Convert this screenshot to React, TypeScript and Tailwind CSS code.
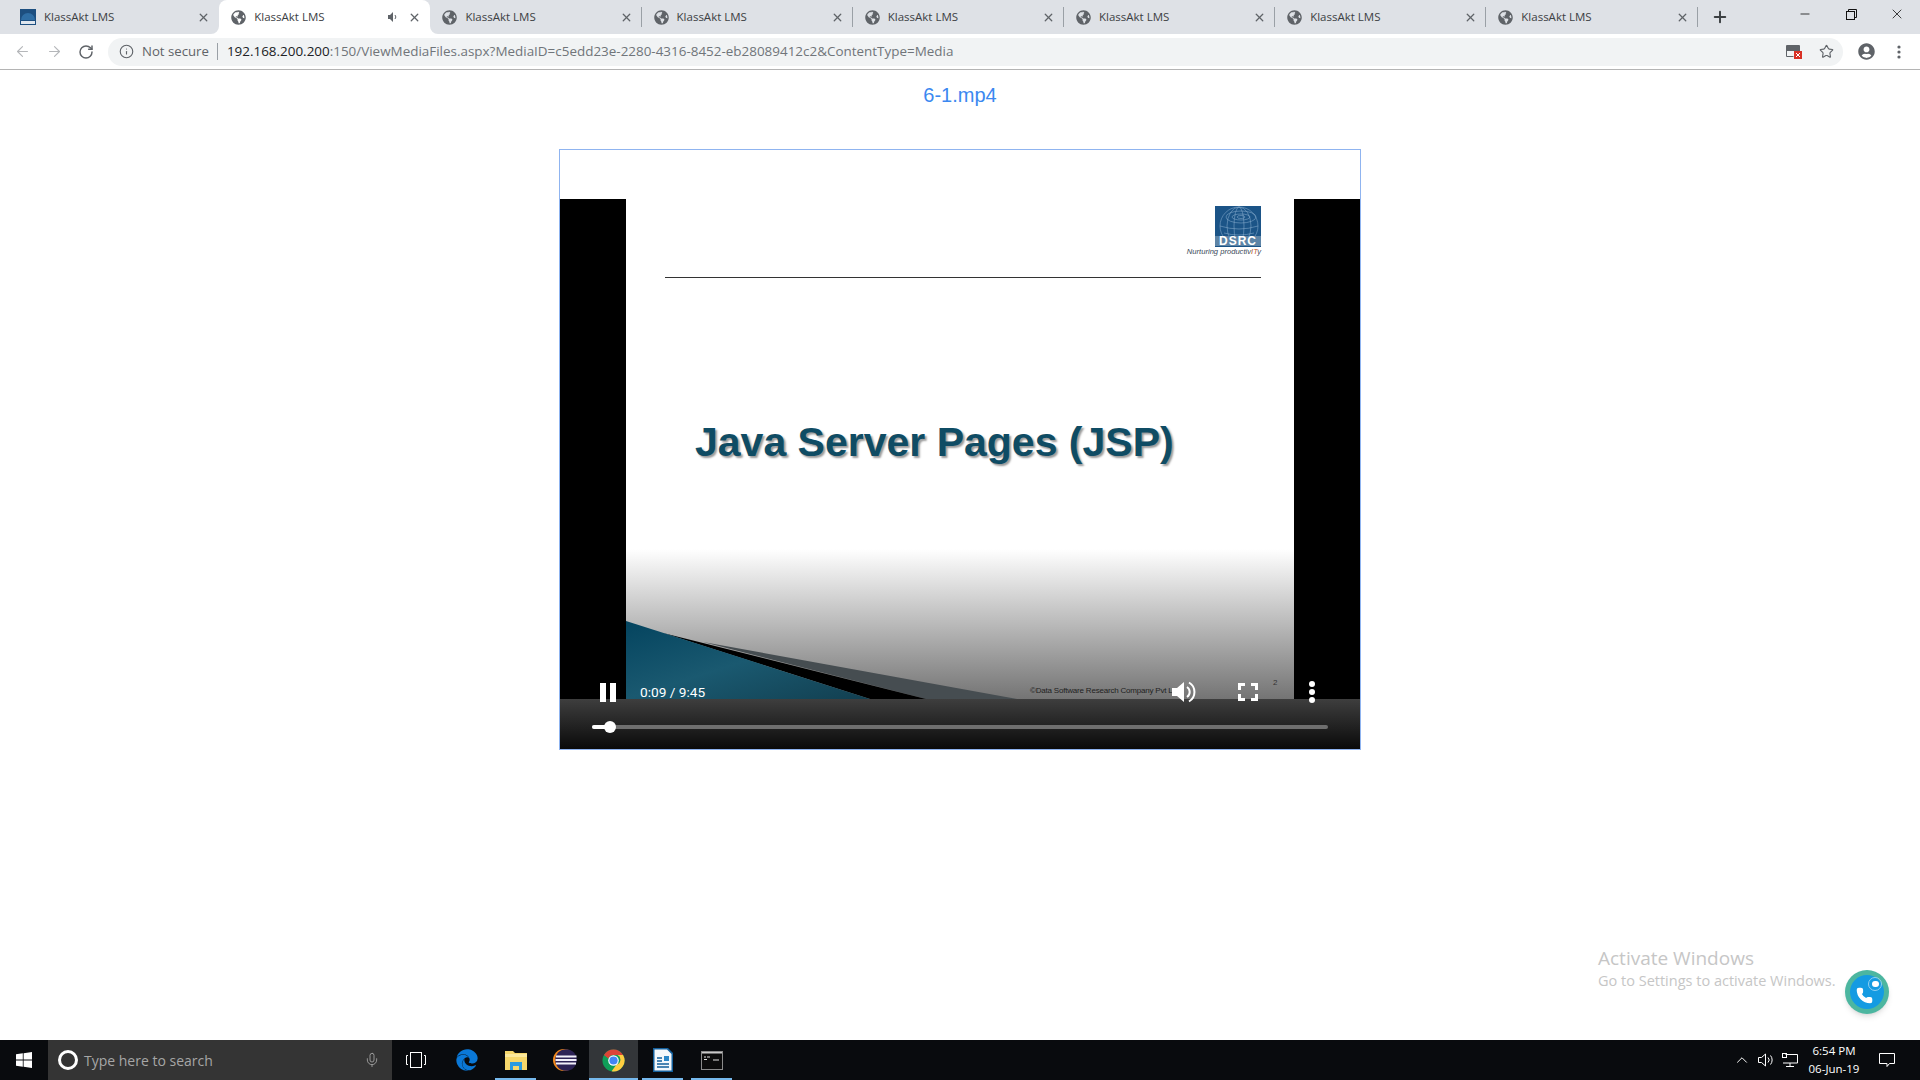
import { ArrowLeft, ArrowRight, RotateCw, Info, Star, Plus, Minus, X, Phone, ChevronUp, Mic } from "lucide-react";
import { FaGlobeAmericas, FaEdge, FaUserCircle } from "react-icons/fa";

const ui = "font-['Open_Sans',sans-serif]";

function Tab({ active, first, sep }: { active?: boolean; first?: boolean; sep?: boolean }) {
  return (
    <div className={`relative flex h-[34px] w-[211.2px] shrink-0 items-center pl-3 pr-[8px] ${active ? "rounded-t-[8px] bg-white" : ""}`}>
      {first ? (
        <svg width="16" height="16" viewBox="0 0 16 16" className="shrink-0">
          <rect width="16" height="16" fill="#1d4f80" />
          <path d="M1 11 A7 7 0 0 1 15 11 Z" fill="#2f6ea5" />
          <rect x="1" y="12" width="14" height="3" fill="#dfe6ee" />
        </svg>
      ) : (
        <FaGlobeAmericas className="shrink-0 text-[15px] text-[#5f6368]" />
      )}
      <span className="ml-2 flex-1 text-[11.5px] text-[#3c4043]">KlassAkt LMS</span>
      {active && (
        <svg width="12" height="12" viewBox="0 0 12 12" className="mr-[9px]">
          <path d="M1 4h2l3-3v10L3 8H1z" fill="#5f6368" />
          <path d="M8 4a3 3 0 0 1 0 4" stroke="#5f6368" fill="none" />
        </svg>
      )}
      <X size={13} strokeWidth={2.4} className="mr-[1px] text-[#5f6368]" />
      {sep && <div className="absolute right-0 top-[7px] h-[20px] w-px bg-[#9aa0a6]" />}
      {active && (
        <>
          <svg width="8" height="8" viewBox="0 0 8 8" className="absolute bottom-0 left-[-8px]">
            <path d="M8 0V8H0A8 8 0 0 0 8 0z" fill="#fff" />
          </svg>
          <svg width="8" height="8" viewBox="0 0 8 8" className="absolute bottom-0 right-[-8px]">
            <path d="M0 0V8H8A8 8 0 0 1 0 0z" fill="#fff" />
          </svg>
        </>
      )}
    </div>
  );
}

function Logo() {
  return (
    <div className="flex flex-col items-end">
      <div className="relative h-[41px] w-[46px] overflow-hidden bg-[#1b5487]">
        <svg width="46" height="41" viewBox="0 0 46 41">
          <g fill="none" stroke="#8fb3d2" strokeWidth="0.5">
            <circle cx="24" cy="20" r="19" />
            <ellipse cx="24" cy="20" rx="12" ry="19" />
            <ellipse cx="24" cy="20" rx="5" ry="19" />
            <ellipse cx="26" cy="11" rx="15" ry="6" />
            <ellipse cx="26" cy="11" rx="9" ry="3" />
            <ellipse cx="26" cy="11" rx="4" ry="1.500" />
            <path d="M5 20q19 6 38 0M9 27q15 4 30 0" />
          </g>
        </svg>
        <div className="absolute inset-x-0 bottom-[1px] bg-[#5d84a6] text-center font-['Liberation_Sans',sans-serif] text-[12px] font-bold leading-[10px] tracking-[1px] text-white">
          DSRC
        </div>
      </div>
      <div className="mt-0 font-['Liberation_Sans',sans-serif] text-[7.6px] italic leading-[9px] text-[#3b4a5a]">
        Nurturing productiv<span className="text-[#c0562a]">IT</span>y
      </div>
    </div>
  );
}

function Slide() {
  return (
    <div className="relative h-[500px] w-[668px] bg-[linear-gradient(to_bottom,#ffffff_0%,#ffffff_70%,#747474_100%)]">
      <div className="flex flex-col pl-[39px] pr-[33px] pt-[7px]">
        <div className="flex justify-end">
          <Logo />
        </div>
        <div className="mt-[21px] h-px bg-[#333]" />
      </div>
      <div className="mt-[126px] pl-[69px] font-['Liberation_Sans',sans-serif] text-[41px] font-bold leading-[76px] text-[#0f4c64] [text-shadow:2px_2px_2px_#9a9a9a]">
        Java Server Pages (JSP)
      </div>
      <svg width="392" height="78" viewBox="0 0 392 78" className="absolute bottom-0 left-0">
        <defs>
          <linearGradient id="teal" x1="0" y1="0" x2="1" y2="1">
            <stop offset="0" stopColor="#04445f" />
            <stop offset="0.5" stopColor="#1a5970" />
            <stop offset="1" stopColor="#123f50" />
          </linearGradient>
        </defs>
        <polygon points="77,21 391,78 300,78" fill="#464d51" />
        <polygon points="37,12 300,78 244,78" fill="#000" />
        <polygon points="0,0 244,78 0,78" fill="url(#teal)" />
      </svg>
      <div className="absolute bottom-[2px] left-[404px] font-['Liberation_Sans',sans-serif] text-[8px] tracking-[-0.2px] text-[#222]">
        ©Data Software Research Company Pvt Ltd
      </div>
      <div className="absolute left-[647px] top-[478px] font-['Liberation_Sans',sans-serif] text-[8px] text-[#333]">2</div>
    </div>
  );
}

function Controls() {
  return (
    <div className="absolute inset-x-0 bottom-[37px] ml-[16px] mr-[16px] flex h-[40px] items-center text-white">
      <div className="flex w-[64px] justify-center">
        <svg width="16" height="19" viewBox="0 0 16 19">
          <rect width="6" height="19" fill="#fff" />
          <rect x="10" width="6" height="19" fill="#fff" />
        </svg>
      </div>
      <span className="flex-1 font-['Roboto',sans-serif] text-[13.7px]">0:09 / 9:45</span>
      <div className="flex w-[64px] justify-center">
        <svg width="26" height="24" viewBox="0 0 26 24">
          <path d="M1 8h5l7-6v20l-7-6H1z" fill="#fff" />
          <path d="M16 7a6 6 0 0 1 0 10" stroke="#fff" strokeWidth="2" fill="none" />
          <path d="M18 2.500a11 11 0 0 1 0 19" stroke="#fff" strokeWidth="2" fill="none" />
        </svg>
      </div>
      <div className="flex w-[64px] justify-center">
        <svg width="20" height="18" viewBox="0 0 20 18" fill="none" stroke="#fff" strokeWidth="3">
          <path d="M1.500 7V1.500H7M13 1.500h5.500V7M18.500 11v5.500H13M7 16.500H1.500V11" />
        </svg>
      </div>
      <div className="flex w-[64px] justify-center">
        <svg width="6" height="22" viewBox="0 0 6 22" fill="#fff">
          <circle cx="3" cy="3" r="3" />
          <circle cx="3" cy="11" r="3" />
          <circle cx="3" cy="19" r="3" />
        </svg>
      </div>
    </div>
  );
}

function Video() {
  return (
    <div className="relative mx-auto mt-[40px] w-[802px] border border-[#8fb4f0]">
      <div className="h-[49px] bg-white" />
      <div className="flex bg-black pl-[66px] pr-[66px]">
        <Slide />
      </div>
      <div className="flex h-[50px] items-center bg-[linear-gradient(to_bottom,#3e3e3e,#0a0a0a)] px-[32px] pt-[6px]">
        <div className="relative h-[4px] flex-1 rounded-full bg-[#6e6e6e]">
          <div className="h-full w-[18px] rounded-full bg-white" />
          <div className="absolute left-[12px] top-[-4px] h-[12px] w-[12px] rounded-full bg-white" />
        </div>
      </div>
      <Controls />
    </div>
  );
}

function ChromeLogo() {
  return (
    <svg width="23" height="23" viewBox="0 0 24 24">
      <circle cx="12" cy="12" r="11.500" fill="#0f9d58" />
      <path d="M2 6.300A11.500 11.500 0 0 1 22 6.300H12a5.700 5.700 0 0 0-5.300 3.600z" fill="#db4437" />
      <path d="M22 6.300A11.500 11.500 0 0 1 10 23.300L15 16.500a5.500 5.500 0 0 0 1.300-10.200z" fill="#ffcd40" />
      <circle cx="12" cy="12" r="5.500" fill="#fff" />
      <circle cx="12" cy="12" r="4.300" fill="#4285f4" />
    </svg>
  );
}

function TaskIcon({ on, active, children }: { on?: boolean; active?: boolean; children: React.ReactNode }) {
  return (
    <div className={`relative flex h-[40px] w-[49px] items-center justify-center ${active ? "bg-[#333639]" : ""}`}>
      {children}
      {on && <div className={`absolute bottom-0 h-[2px] bg-[#76b9ed] ${active ? "inset-x-0" : "inset-x-[4px]"}`} />}
    </div>
  );
}

function Taskbar() {
  return (
    <div className={`flex h-[40px] shrink-0 items-center bg-[#090b0e] ${ui}`}>
      <div className="flex h-[40px] w-[48px] items-center justify-center">
        <svg width="16" height="16" viewBox="0 0 16 16" fill="#fff">
          <path d="M0 2.300 6.800 1.300V7.600H0zM7.600 1.200 16 0V7.600H7.600zM0 8.400H6.800V14.700L0 13.700zM7.600 8.400H16V16L7.600 14.800z" />
        </svg>
      </div>
      <div className="flex h-[40px] w-[344px] items-center bg-[#343434] pl-[10px] pr-[12px]">
        <div className="h-[20px] w-[20px] rounded-full border-[3px] border-white" />
        <span className="ml-[6px] flex-1 text-[14px] text-[#a6a6a6]">Type here to search</span>
        <Mic size={16} strokeWidth={1.3} className="text-[#a6a6a6]" />
      </div>
      <div className="mr-[2px] flex h-[40px] w-[48px] items-center justify-center">
        <svg width="20" height="18" viewBox="0 0 20 18" fill="none" stroke="#fff">
          <rect x="4.500" y="1.500" width="11" height="15" />
          <path d="M2 4.500H.5v9H2M18 4.500h1.500v9H18" />
        </svg>
      </div>
      <TaskIcon>
        <FaEdge className="text-[22px] text-[#0a78d7]" />
      </TaskIcon>
      <TaskIcon on>
        <svg width="22" height="19" viewBox="0 0 22 19">
          <path d="M0 0h8l2 2h12v17H0z" fill="#f6d76b" />
          <rect x="0" y="3" width="22" height="3" fill="#fbe89c" />
          <path d="M5 11h12v8h-3v-4H8v4H5z" fill="#2a9be0" />
        </svg>
      </TaskIcon>
      <TaskIcon>
        <svg width="24" height="22" viewBox="0 0 24 22">
          <ellipse cx="11" cy="11" rx="11" ry="11" fill="#f28a1e" />
          <circle cx="13" cy="11" r="10.800" fill="#2c2255" />
          <path d="M3 7.500h20.500M2.500 11h21M3 14.500h20" stroke="#f2f0fa" strokeWidth="1.800" />
        </svg>
      </TaskIcon>
      <TaskIcon on active>
        <ChromeLogo />
      </TaskIcon>
      <TaskIcon on>
        <svg width="20" height="24" viewBox="0 0 20 24">
          <path d="M0 0h15l5 5v19H0z" fill="#135f9b" />
          <path d="M1.500 1.500h12.500l4.500 4.500v16.500H1.500z" fill="#f4f8fb" />
          <path d="M4 10h5M4 13h5M4 16h12M4 19h12" stroke="#135f9b" strokeWidth="1.400" />
          <rect x="11" y="8" width="5" height="5" fill="#2b87c8" />
        </svg>
      </TaskIcon>
      <TaskIcon on>
        <svg width="22" height="19" viewBox="0 0 22 19">
          <rect x=".5" y=".5" width="21" height="18" fill="#0c0c0c" stroke="#8a8a8a" />
          <rect x="1" y="1" width="20" height="1.500" fill="#c9c9c9" />
          <path d="M3 6h2M6 6h3M3 8.500h3M12 9h6" stroke="#e0e0e0" />
        </svg>
      </TaskIcon>
      <div className="ml-auto flex h-[40px] items-center text-white">
        <div className="flex w-[24px] justify-center">
          <ChevronUp size={18} strokeWidth={1.3} />
        </div>
        <div className="flex w-[24px] justify-center">
          <svg width="16" height="14" viewBox="0 0 16 14" fill="none" stroke="#fff">
            <path d="M.5 4.500h3l4-3.500v12l-4-3.500h-3z" />
            <path d="M10 4.500a3.500 3.500 0 0 1 0 5M12.500 2.500a7 7 0 0 1 0 9" />
          </svg>
        </div>
        <div className="flex w-[24px] justify-center">
          <svg width="16" height="14" viewBox="0 0 16 14" fill="none" stroke="#fff">
            <path d="M3.500 1.500H15.500V10H1M8 10v3M4 13.500h8" />
            <rect x=".5" y=".5" width="4" height="4" />
          </svg>
        </div>
        <div className="w-[64px] text-center text-[11.5px] leading-[18px]">
          <div>6:54 PM</div>
          <div>06-Jun-19</div>
        </div>
        <div className="flex w-[42px] justify-center">
          <svg width="16" height="15" viewBox="0 0 16 15" fill="none" stroke="#fff">
            <path d="M.5.500h15v10h-5l-2.500 3v-3H.5z" />
          </svg>
        </div>
        <div className="w-[12px]" />
      </div>
    </div>
  );
}

export default function App() {
  return (
    <div className={`flex h-screen w-full flex-col overflow-hidden bg-white ${ui}`}>
      <div className="flex h-[34px] shrink-0 items-center bg-[#dee1e6] pl-[8px]">
        <Tab first />
        <Tab active />
        <Tab sep />
        <Tab sep />
        <Tab sep />
        <Tab sep />
        <Tab sep />
        <Tab sep />
        <Plus size={18} strokeWidth={2.6} className="ml-[13px] text-[#3c4043]" />
        <div className="ml-auto flex items-center pb-[6px] text-[#111]">
          <div className="flex w-[46px] justify-center">
            <Minus size={14} strokeWidth={1.4} />
          </div>
          <div className="flex w-[46px] justify-center">
            <svg width="11" height="11" viewBox="0 0 11 11" fill="none" stroke="#111">
              <rect x=".5" y="2.500" width="8" height="8" />
              <path d="M2.500 2.500v-2h8v8h-2" />
            </svg>
          </div>
          <div className="flex w-[46px] justify-center">
            <X size={16} strokeWidth={1.2} />
          </div>
        </div>
      </div>

      <div className="flex h-[36px] shrink-0 items-center border-b border-[#b4b4b4] bg-white">
        <div className="flex w-[108px] items-center pl-[6px] text-[#5f6368]">
          <div className="flex w-[32px] justify-center">
            <ArrowLeft size={17} strokeWidth={1.6} className="text-[#b5b7ba]" />
          </div>
          <div className="flex w-[32px] justify-center">
            <ArrowRight size={17} strokeWidth={1.6} className="text-[#b5b7ba]" />
          </div>
          <div className="flex w-[32px] justify-center">
            <RotateCw size={16} strokeWidth={2.2} />
          </div>
        </div>
        <div className="flex h-[28px] w-[1735px] items-center rounded-full bg-[#f1f3f4] pl-[11px] pr-[9px]">
          <Info size={15} strokeWidth={1.8} className="text-[#5f6368]" />
          <span className="ml-[8px] text-[13.2px] text-[#5f6368]">Not secure</span>
          <div className="ml-[8px] h-[17px] w-px bg-[#9aa0a6]" />
          <span className="ml-[9px] flex-1 text-[13.45px] text-[#70757a]">
            <span className="text-[#202124]">192.168.200.200</span>:150/ViewMediaFiles.aspx?MediaID=c5edd23e-2280-4316-8452-eb28089412c2&amp;ContentType=Media
          </span>
          <svg width="16" height="15" viewBox="0 0 16 15" className="mr-[17px]">
            <path d="M1 1h12v6H1z" fill="#5f6368" />
            <path d="M.5 1.500h13v7M.5 1.500v11h7" fill="none" stroke="#5f6368" />
            <rect x="8" y="7" width="8" height="8" fill="#d93025" />
            <path d="M10 9l4 4M14 9l-4 4" stroke="#fff" />
          </svg>
          <Star size={15} strokeWidth={1.8} className="text-[#5f6368]" />
        </div>
        <div className="flex flex-1 items-center">
          <FaUserCircle className="ml-[15px] text-[17px] text-[#5f6368]" />
          <svg width="4" height="14" viewBox="0 0 4 14" fill="#5f6368" className="ml-[22px]">
            <circle cx="2" cy="2" r="1.600" />
            <circle cx="2" cy="7" r="1.600" />
            <circle cx="2" cy="12" r="1.600" />
          </svg>
        </div>
      </div>

      <main className="relative flex-1 pt-[11px]">
        <h1 className="text-center font-['Liberation_Sans',sans-serif] text-[20px] leading-[28px] text-[#3b88f0]">6-1.mp4</h1>
        <Video />
        <div className="absolute left-[1598px] top-[876px] whitespace-nowrap text-[#c6c6c6]">
          <div className="text-[19px] leading-[24px]">Activate Windows</div>
          <div className="text-[14.5px] leading-[22px]">Go to Settings to activate Windows.</div>
        </div>
        <div className="absolute left-[1845px] top-[900px] flex h-[44px] w-[44px] items-center justify-center rounded-full bg-[#4cb6a0] shadow-md">
          <div className="relative flex h-[34px] w-[34px] items-center justify-center rounded-full bg-[#149be2]">
            <Phone size={17} fill="#fff" stroke="#fff" className="mr-[5px] mt-[7px]" />
            <div className="absolute right-[2px] top-[2px] flex h-[14px] w-[14px] items-center justify-center rounded-full border border-[#8fd0f2]">
              <div className="h-[6px] w-[7px] rounded-full bg-white" />
            </div>
          </div>
        </div>
      </main>

      <Taskbar />
    </div>
  );
}
